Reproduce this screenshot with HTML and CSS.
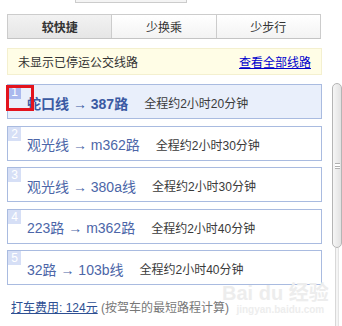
FILE: index.html
```html
<!DOCTYPE html>
<html lang="zh-CN">
<head>
    <meta charset="UTF-8">
    <title>公交路线</title>
    <link rel="stylesheet" href="styles.css">
</head>
<body>
    <div class="page">
        <div class="main">
            <div class="top-box"></div>
            <div class="tabs">
                <div class="tab active">较快捷</div>
                <div class="tab">少换乘</div>
                <div class="tab">少步行</div>
            </div>
            <div class="notice">
                <span>未显示已停运公交线路</span>
                <a href="#">查看全部线路</a>
            </div>
            <div class="routes">
                <div class="route current">
                    <span class="num">1</span>
                    <span class="name">蛇口线 → 387路</span>
                    <span class="time">全程约2小时20分钟</span>
                    <div class="mark"></div>
                </div>
                <div class="route">
                    <span class="num">2</span>
                    <span class="name">观光线 → m362路</span>
                    <span class="time">全程约2小时30分钟</span>
                </div>
                <div class="route">
                    <span class="num">3</span>
                    <span class="name">观光线 → 380a线</span>
                    <span class="time">全程约2小时30分钟</span>
                </div>
                <div class="route">
                    <span class="num">4</span>
                    <span class="name">223路 → m362路</span>
                    <span class="time">全程约2小时40分钟</span>
                </div>
                <div class="route">
                    <span class="num">5</span>
                    <span class="name">32路 → 103b线</span>
                    <span class="time">全程约2小时40分钟</span>
                </div>
            </div>
            <div class="taxi">
                <a href="#">打车费用: 124元</a>
                <span>(按驾车的最短路程计算)</span>
            </div>
        </div>
        <div class="scrollbar">
            <div class="thumb"><span class="grip"></span></div>
            <div class="track"></div>
        </div>
    </div>
    <div class="watermark">
        <div class="wm-logo">Bai du 经验</div>
        <div class="wm-url">jingyan.baidu.com</div>
    </div>
</body>
</html>
```

FILE: styles.css
```css
* {
    padding: 0;
    margin: 0;
    box-sizing: border-box;
}

body {
    width: 342px;
    height: 326px;
    overflow: hidden;
    background: #ffffff;
    font-family: "Liberation Sans", "Noto Sans CJK SC", sans-serif;
    font-size: 12px;
    color: #333333;
    position: relative;
}

.page {
    display: flex;
    height: 100%;
}

.main {
    width: 315px;
    margin-left: 7px;
}

.top-box {
    width: 112px;
    height: 3px;
    margin-left: 68px;
    border: 1px solid #cccccc;
    border-top: none;
    background: #f4f4f4;
}

.tabs {
    display: flex;
    width: 314px;
    height: 25px;
    margin-top: 11px;
    border: 1px solid #cccccc;
    border-bottom-color: #c4c4c4;
}

.tab {
    flex: 1;
    display: flex;
    justify-content: center;
    align-items: center;
    font-size: 12px;
    color: #333333;
    background: linear-gradient(#ffffff, #f3f3f3);
    border-left: 1px solid #cccccc;
}

.tab:first-child {
    border-left: none;
}

.tab.active {
    font-weight: bold;
    background: linear-gradient(#f2f2f2, #e6e6e6);
}

.notice {
    display: flex;
    justify-content: space-between;
    align-items: center;
    height: 27px;
    margin-top: 9px;
    padding: 0 10px 0 10px;
    background: #fffde6;
    border: 1px solid #f4f0cf;
    color: #333333;
}

.notice a {
    color: #0000cc;
    text-decoration: underline;
}

.routes {
    display: flex;
    flex-direction: column;
    gap: 6.5px;
    margin-top: 9px;
}

.route {
    position: relative;
    display: flex;
    align-items: center;
    height: 35px;
    border: 1px solid #a9bbe0;
    background: #ffffff;
}

.route.current {
    background: #e9effb;
}

.num {
    align-self: flex-start;
    width: 13px;
    height: 14px;
    background: #d6dff6;
    color: #ffffff;
    font-size: 12px;
    line-height: 14px;
    text-align: center;
}

.current .num {
    background: #aab9ee;
}

.name {
    margin-left: 6px;
    margin-top: 2px;
    font-size: 14px;
    color: #4c66a8;
}

.current .name {
    font-weight: bold;
    color: #3b5aa3;
}

.time {
    margin-left: 16px;
    margin-top: 2px;
    color: #3a3a3a;
}

.mark {
    position: absolute;
    left: -2px;
    top: 0;
    width: 28px;
    height: 26px;
    border: 3px solid #e3131d;
}

.taxi {
    margin-top: 13px;
    padding-left: 4px;
}

.taxi a {
    color: #2d4f93;
    text-decoration: underline;
}

.taxi span {
    color: #777777;
}

.scrollbar {
    display: flex;
    flex-direction: column;
    align-items: center;
    width: 10px;
    margin-left: 10px;
    padding-top: 83px;
}

.thumb {
    display: flex;
    justify-content: center;
    align-items: center;
    width: 10px;
    height: 165px;
    border: 1px solid #b5b5b5;
    border-radius: 5px;
    background: linear-gradient(90deg, #f6f6f6, #e2e2e2);
}

.grip {
    width: 5px;
    height: 6px;
    border-top: 1px solid #b0b0b0;
    border-bottom: 1px solid #b0b0b0;
    background: linear-gradient(#ffffff 2px, #b0b0b0 2px, #b0b0b0 3px, #ffffff 3px);
}

.track {
    flex: 1;
    width: 4px;
    border-left: 1px solid #d8d8d8;
    border-right: 1px solid #e4e4e4;
    background: #f4f4f4;
}

.watermark {
    position: absolute;
    left: 222px;
    top: 282px;
    color: #ededed;
    text-align: center;
}

.wm-logo {
    font-size: 20px;
    font-weight: bold;
    line-height: 22px;
}

.wm-url {
    font-size: 10px;
    font-weight: bold;
    line-height: 12px;
    margin-left: 10px;
}
```
